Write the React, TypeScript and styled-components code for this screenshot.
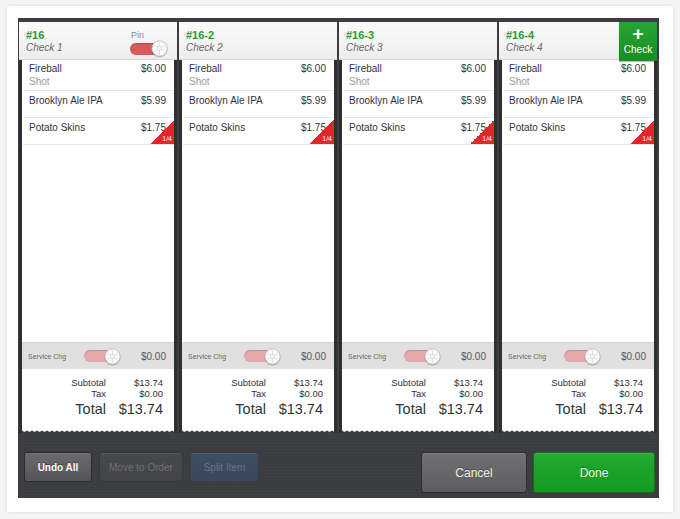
import React from "react";
import styled, { createGlobalStyle } from "styled-components";

const GlobalStyle = createGlobalStyle`
  html, body {
    margin: 0;
    padding: 0;
    background: #f4f4f4;
    font-family: "Liberation Sans", Arial, sans-serif;
  }
`;

interface Item {
  name: string;
  note?: string;
  price: string;
  split?: string;
}

interface CheckData {
  number: string;
  name: string;
  extra?: "pin" | "add";
}

const items: Item[] = [
  { name: "Fireball", note: "Shot", price: "$6.00" },
  { name: "Brooklyn Ale IPA", price: "$5.99" },
  { name: "Potato Skins", price: "$1.75", split: "1/4" },
];

const checks: CheckData[] = [
  { number: "#16", name: "Check 1", extra: "pin" },
  { number: "#16-2", name: "Check 2" },
  { number: "#16-3", name: "Check 3" },
  { number: "#16-4", name: "Check 4", extra: "add" },
];

const Knob: React.FC<{ size: number }> = ({ size }) => (
  <svg width={size} height={size} viewBox="0 0 16 16">
    <circle cx="8" cy="8" r="7.2" fill="#fbfbfb" stroke="#b9b9b9" strokeWidth="0.8" />
    <g stroke="#d2d2d2" strokeWidth="0.6">
      <line x1="8" y1="2" x2="8" y2="14" />
      <line x1="3" y1="5" x2="13" y2="11" />
      <line x1="3" y1="11" x2="13" y2="5" />
    </g>
    <circle cx="8" cy="8" r="2" fill="#f4f4f4" stroke="#c8c8c8" strokeWidth="0.5" />
  </svg>
);

const App: React.FC = () => {
  return (
    <>
      <GlobalStyle />
      <Page>
        <Card>
          <Panel>
            <Columns>
              {checks.map((c) => (
                <Column key={c.number}>
                  <Header>
                    <HeaderText>
                      <CheckNumber>{c.number}</CheckNumber>
                      <CheckName>{c.name}</CheckName>
                    </HeaderText>
                    {c.extra === "pin" && (
                      <PinBox>
                        <PinLabel>Pin</PinLabel>
                        <Toggle $w={38} $h={12} $color="#d65c5c">
                          <KnobWrap $size={17}>
                            <Knob size={17} />
                          </KnobWrap>
                        </Toggle>
                      </PinBox>
                    )}
                    {c.extra === "add" && (
                      <AddButton>
                        <Plus>+</Plus>
                        <span>Check</span>
                      </AddButton>
                    )}
                  </Header>
                  <Body>
                    {items.map((it, i) => (
                      <Row key={it.name} $first={i === 0}>
                        <RowMain>
                          <span>{it.name}</span>
                          <span>{it.price}</span>
                        </RowMain>
                        {it.note && <Note>{it.note}</Note>}
                        {it.split && (
                          <SplitBadge>
                            <span>{it.split}</span>
                          </SplitBadge>
                        )}
                      </Row>
                    ))}
                    <Spacer />
                    <ServiceRow>
                      <ServiceLabel>Service Chg</ServiceLabel>
                      <Toggle $w={37} $h={12} $color="#e3a9a9">
                        <KnobWrap $size={17}>
                          <Knob size={17} />
                        </KnobWrap>
                      </Toggle>
                      <ServicePrice>$0.00</ServicePrice>
                    </ServiceRow>
                    <Totals>
                      <TotalLine>
                        <TotalLabel>Subtotal</TotalLabel>
                        <TotalValue>$13.74</TotalValue>
                      </TotalLine>
                      <TotalLine>
                        <TotalLabel>Tax</TotalLabel>
                        <TotalValue>$0.00</TotalValue>
                      </TotalLine>
                      <TotalLine $big>
                        <TotalLabel>Total</TotalLabel>
                        <TotalValue>$13.74</TotalValue>
                      </TotalLine>
                    </Totals>
                  </Body>
                  <Zigzag />
                </Column>
              ))}
            </Columns>
            <Toolbar>
              <ButtonGroup>
                <ToolButton $variant="undo" $w={68}>Undo All</ToolButton>
                <ToolButton $variant="disabled" $w={84}>Move to Order</ToolButton>
                <ToolButton $variant="blue" $w={69}>Split Item</ToolButton>
              </ButtonGroup>
              <ButtonGroup>
                <BigButton $variant="cancel" $w={106}>Cancel</BigButton>
                <BigButton $variant="done" $w={122}>Done</BigButton>
              </ButtonGroup>
            </Toolbar>
          </Panel>
        </Card>
      </Page>
    </>
  );
};

const Page = styled.div`
  width: 680px;
  height: 519px;
  padding: 6px 0 0 7px;
  box-sizing: border-box;
`;

const Card = styled.div`
  width: 666px;
  height: 506px;
  background: #ffffff;
  box-shadow: 0 0 3px rgba(0, 0, 0, 0.12);
  padding: 12px 14px 14px 11px;
  box-sizing: border-box;
`;

const Panel = styled.div`
  width: 641px;
  height: 480px;
  background-color: #3c3d41;
  background-image: repeating-linear-gradient(
      0deg,
      rgba(255, 255, 255, 0.015) 0px,
      rgba(255, 255, 255, 0.015) 1px,
      transparent 1px,
      transparent 3px
    ),
    repeating-linear-gradient(
      90deg,
      rgba(0, 0, 0, 0.04) 0px,
      rgba(0, 0, 0, 0.04) 1px,
      transparent 1px,
      transparent 3px
    );
  display: flex;
  flex-direction: column;
  box-sizing: border-box;
  padding-top: 4px;
`;

const Columns = styled.div`
  display: flex;
  gap: 2px;
  padding-left: 1px;
`;

const Column = styled.div`
  width: 158px;
  height: 411px;
  display: flex;
  flex-direction: column;
  background: #2e2f32;
`;

const Header = styled.div`
  height: 38px;
  flex-shrink: 0;
  background: linear-gradient(#fbfbfb, #ededed);
  border-bottom: 1px solid #d4d4d4;
  box-sizing: border-box;
  display: flex;
  justify-content: space-between;
  align-items: flex-start;
  padding-left: 7px;
`;

const HeaderText = styled.div`
  display: flex;
  flex-direction: column;
  padding-top: 7px;
`;

const CheckNumber = styled.span`
  color: #2f9a32;
  font-weight: 700;
  font-size: 11px;
  line-height: 12px;
`;

const CheckName = styled.span`
  color: #6a6a6a;
  font-style: italic;
  font-size: 10px;
  line-height: 13px;
`;

const PinBox = styled.div`
  display: flex;
  flex-direction: column;
  align-items: flex-start;
  padding: 8px 9px 0 0;
`;

const PinLabel = styled.span`
  color: #8a8a8a;
  font-size: 9px;
  line-height: 10px;
  margin-left: 1px;
`;

const Toggle = styled.div<{ $w: number; $h: number; $color: string }>`
  position: relative;
  width: ${(p) => p.$w}px;
  height: 17px;
  display: flex;
  align-items: center;
  &::before {
    content: "";
    width: ${(p) => p.$w - 7}px;
    height: ${(p) => p.$h}px;
    border-radius: ${(p) => p.$h / 2}px;
    background: ${(p) => p.$color};
    box-shadow: inset 0 1px 1px rgba(0, 0, 0, 0.15);
  }
`;

const KnobWrap = styled.div<{ $size: number }>`
  position: absolute;
  right: 0;
  top: 0;
  width: ${(p) => p.$size}px;
  height: ${(p) => p.$size}px;
  display: flex;
  filter: drop-shadow(0 1px 0.5px rgba(0, 0, 0, 0.2));
`;

const AddButton = styled.div`
  width: 38px;
  height: 39px;
  background: linear-gradient(#27a534, #178e22);
  color: #ffffff;
  display: flex;
  flex-direction: column;
  align-items: center;
  font-size: 10px;
  line-height: 11px;
  box-shadow: 0 1px 1px rgba(0, 0, 0, 0.25);
  position: relative;
  z-index: 1;
`;

const Plus = styled.span`
  font-size: 19px;
  font-weight: 700;
  line-height: 20px;
  margin-top: 2px;
`;

const Body = styled.div`
  flex: 1;
  margin: 0 3px;
  background: #ffffff;
  display: flex;
  flex-direction: column;
`;

const Row = styled.div<{ $first?: boolean }>`
  position: relative;
  height: ${(p) => (p.$first ? 31 : 27)}px;
  box-sizing: border-box;
  padding: ${(p) => (p.$first ? "2px" : "3px")} 8px 0 6px;
  border-bottom: 1px solid #e6e6e6;
  margin-left: 1px;
`;

const RowMain = styled.div`
  display: flex;
  justify-content: space-between;
  font-size: 10px;
  line-height: 13px;
  color: #333333;
`;

const Note = styled.div`
  font-size: 10px;
  line-height: 13px;
  color: #9a9a9a;
`;

const SplitBadge = styled.div`
  position: absolute;
  right: 0;
  bottom: 0;
  width: 24px;
  height: 24px;
  background: linear-gradient(to top left, #e42626 50%, transparent 50%);
  display: flex;
  align-items: flex-end;
  justify-content: flex-end;
  span {
    color: #ffffff;
    font-size: 7px;
    line-height: 9px;
    padding: 0 2px 1px 0;
  }
`;

const Spacer = styled.div`
  flex: 1;
`;

const ServiceRow = styled.div`
  height: 27px;
  box-sizing: border-box;
  background: #e0e0e0;
  border-top: 1px solid #d0d0d0;
  display: flex;
  align-items: center;
  padding: 0 8px 0 6px;
`;

const ServiceLabel = styled.span`
  font-size: 7px;
  color: #666666;
  width: 56px;
`;

const ServicePrice = styled.span`
  margin-left: auto;
  font-size: 10px;
  color: #555555;
`;

const Totals = styled.div`
  height: 60px;
  box-sizing: border-box;
  padding: 8px 11px 0 0;
  display: flex;
  flex-direction: column;
`;

const TotalLine = styled.div<{ $big?: boolean }>`
  display: grid;
  grid-template-columns: 84px 1fr;
  font-size: ${(p) => (p.$big ? "14.5px" : "9.5px")};
  line-height: ${(p) => (p.$big ? "19px" : "11px")};
  color: #333333;
  margin-top: ${(p) => (p.$big ? "1px" : "0")};
`;

const TotalLabel = styled.span`
  text-align: right;
`;

const TotalValue = styled.span`
  text-align: right;
`;

const Zigzag = styled.div`
  height: 4px;
  margin: 0 3px;
  background: radial-gradient(circle at 50% 0, #ffffff 2.4px, transparent 2.9px) repeat-x;
  background-size: 5px 4px;
  background-color: #3c3d41;
`;

const Toolbar = styled.div`
  flex: 1;
  display: flex;
  justify-content: space-between;
  align-items: flex-start;
  padding: 19px 4px 0 6px;
`;

const ButtonGroup = styled.div`
  display: flex;
  gap: 7px;
  align-items: flex-start;
`;

const toolColors = {
  undo: { bg: "linear-gradient(#6b6b6d, #545557)", fg: "#ffffff", border: "#2b2b2d" },
  disabled: { bg: "linear-gradient(#48494d, #434448)", fg: "#6f7075", border: "#36373a" },
  blue: { bg: "linear-gradient(#414d63, #3b475d)", fg: "#66738c", border: "#343c4a" },
};

const ToolButton = styled.div<{ $variant: keyof typeof toolColors; $w: number }>`
  width: ${(p) => p.$w}px;
  height: 30px;
  box-sizing: border-box;
  border-radius: 3px;
  border: 1px solid ${(p) => toolColors[p.$variant].border};
  background: ${(p) => toolColors[p.$variant].bg};
  color: ${(p) => toolColors[p.$variant].fg};
  font-size: 10px;
  font-weight: ${(p) => (p.$variant === "undo" ? 700 : 400)};
  display: flex;
  align-items: center;
  justify-content: center;
  box-shadow: inset 0 1px 0 rgba(255, 255, 255, 0.08);
  text-shadow: ${(p) => (p.$variant === "undo" ? "0 -1px 0 rgba(0,0,0,0.4)" : "none")};
`;

const bigColors = {
  cancel: { bg: "linear-gradient(#717173, #5c5c5e)", fg: "#f0f0f0", border: "#2d2d2f" },
  done: { bg: "linear-gradient(#22aa31, #169a22)", fg: "#eaffea", border: "#12701a" },
};

const BigButton = styled.div<{ $variant: keyof typeof bigColors; $w: number }>`
  width: ${(p) => p.$w}px;
  height: 41px;
  box-sizing: border-box;
  border-radius: 3px;
  border: 1px solid ${(p) => bigColors[p.$variant].border};
  background: ${(p) => bigColors[p.$variant].bg};
  color: ${(p) => bigColors[p.$variant].fg};
  font-size: 12px;
  display: flex;
  align-items: center;
  justify-content: center;
  box-shadow: inset 0 1px 0 rgba(255, 255, 255, 0.12);
  text-shadow: 0 -1px 0 rgba(0, 0, 0, 0.3);
  margin-left: ${(p) => (p.$variant === "done" ? "-1px" : "0")};
`;

export default App;
